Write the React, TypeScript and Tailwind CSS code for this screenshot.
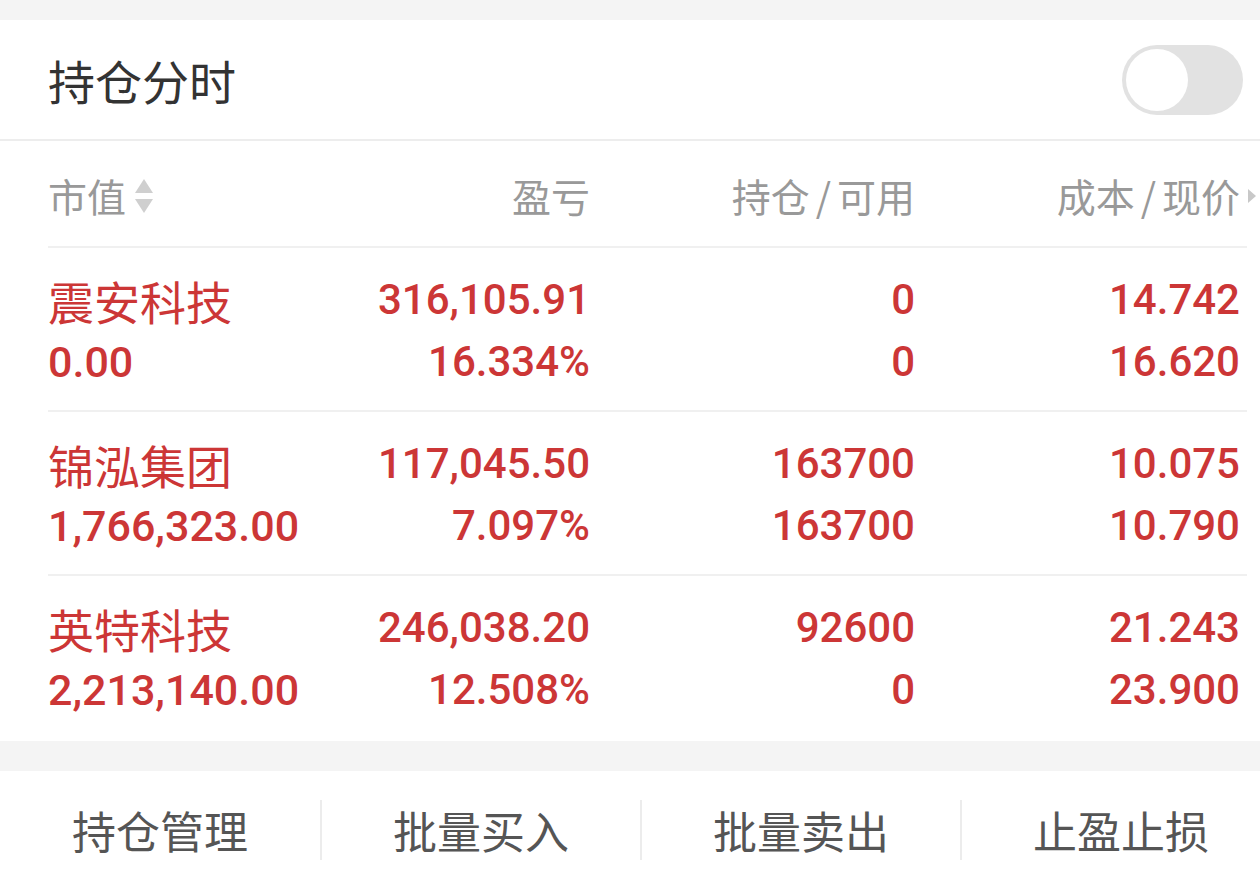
import { ReactNode } from "react";

const CJK = "font-['Noto_Sans_CJK_SC',sans-serif]";
const NUM = "font-['Roboto','Noto_Sans_CJK_SC',sans-serif] font-medium";

type Position = {
  name: string;
  value: string;
  profit: string;
  ratio: string;
  hold: string;
  avail: string;
  cost: string;
  price: string;
};

const positions: Position[] = [
  {
    name: "震安科技",
    value: "0.00",
    profit: "316,105.91",
    ratio: "16.334%",
    hold: "0",
    avail: "0",
    cost: "14.742",
    price: "16.620",
  },
  {
    name: "锦泓集团",
    value: "1,766,323.00",
    profit: "117,045.50",
    ratio: "7.097%",
    hold: "163700",
    avail: "163700",
    cost: "10.075",
    price: "10.790",
  },
  {
    name: "英特科技",
    value: "2,213,140.00",
    profit: "246,038.20",
    ratio: "12.508%",
    hold: "92600",
    avail: "0",
    cost: "21.243",
    price: "23.900",
  },
];

const actions = ["持仓管理", "批量买入", "批量卖出", "止盈止损"];

const SortIcon = () => (
  <svg width="20" height="38" viewBox="0 0 20 38" className="ml-[8px]">
    <path d="M10 2 L19 16 L1 16 Z" fill="#cfcfcf" />
    <path d="M10 36 L19 22 L1 22 Z" fill="#cfcfcf" />
  </svg>
);

const Slash = () => <span className="mx-[6px]">/</span>;

const App = (): ReactNode => {
  return (
    <div className={`w-[1260px] h-[888px] bg-[#f4f4f4] ${CJK} overflow-hidden`}>
      <div className="h-[20px]" />
      {/* card */}
      <div className="bg-white">
        <div className="h-[121px] flex items-center justify-between pl-[48px] pr-[17px] border-b-2 border-[#ededed]">
          <span className="text-[47px] leading-none text-[#333]">持仓分时</span>
          <div className="w-[121px] h-[70px] rounded-full bg-[#e2e2e2] p-[4px] flex items-center">
            <div className="w-[62px] h-[62px] rounded-full bg-white" />
          </div>
        </div>

        <div className="ml-[48px] mr-[13px]">
          {/* header row */}
          <div className="h-[107px] pt-[4px] grid grid-cols-[217px_325px_325px_325px] items-center text-[39px] text-[#999] border-b-2 border-[#f0f0f0] pr-[7px]">
            <div className="flex items-center">
              <span>市值</span>
              <SortIcon />
            </div>
            <div className="text-right">盈亏</div>
            <div className="text-right">
              持仓<Slash />可用
            </div>
            <div className="text-right relative">
              成本<Slash />现价
              <span className="absolute right-[-16px] top-1/2 -translate-y-1/2 w-0 h-0 border-y-[7px] border-y-transparent border-l-[8px] border-l-[#c8c8c8]" />
            </div>
          </div>

          {positions.map((p, i) => (
            <div
              key={p.name}
              className={`grid grid-cols-[217px_325px_325px_325px] pt-[21px] pr-[7px] text-[#cc3636] leading-[62px] ${
                i < positions.length - 1 ? "pb-[17px] border-b-2 border-[#f0f0f0]" : "pb-[20px]"
              }`}
            >
              <div className="flex flex-col whitespace-nowrap">
                <span className={`${CJK} text-[46px]`}>{p.name}</span>
                <span className={`${NUM} text-[43px]`}>{p.value}</span>
              </div>
              <div className={`flex flex-col text-right ${NUM} text-[42px]`}>
                <span>{p.profit}</span>
                <span>{p.ratio}</span>
              </div>
              <div className={`flex flex-col text-right ${NUM} text-[42px]`}>
                <span>{p.hold}</span>
                <span>{p.avail}</span>
              </div>
              <div className={`flex flex-col text-right ${NUM} text-[42px]`}>
                <span>{p.cost}</span>
                <span>{p.price}</span>
              </div>
            </div>
          ))}
        </div>
      </div>

      <div className="h-[30px]" />

      {/* bottom actions */}
      <div className="bg-white h-[118px] grid grid-cols-[320px_320px_320px_320px] items-center">
        {actions.map((a, i) => (
          <div
            key={a}
            className={`h-[60px] flex items-center justify-center text-[44px] text-[#555] ${
              i > 0 ? "border-l-2 border-[#ececec]" : ""
            }`}
          >
            {a}
          </div>
        ))}
      </div>
    </div>
  );
};

export default App;
